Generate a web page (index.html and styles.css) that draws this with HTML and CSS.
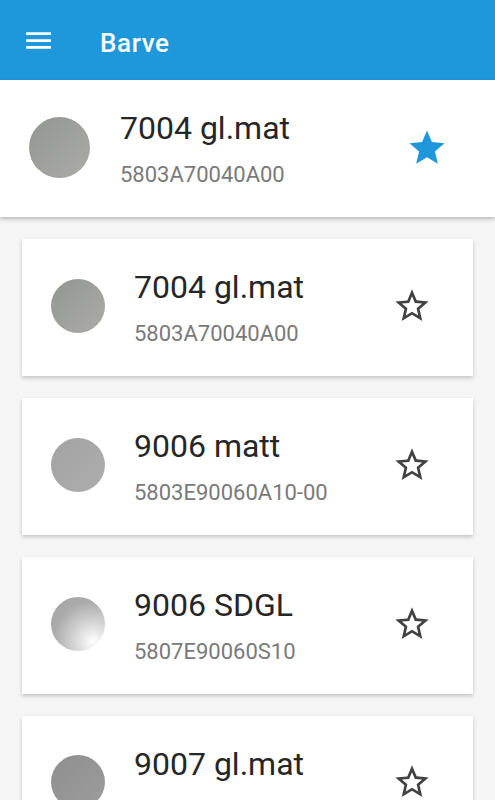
FILE: index.html
```html
<!DOCTYPE html>
<html lang="sl">
<head>
    <meta charset="UTF-8">
    <meta name="viewport" content="width=device-width, initial-scale=1.0">
    <title>Barve</title>
    <link rel="stylesheet" href="styles.css">
</head>
<body>

    <header class="toolbar">
        <svg class="menu-icon" viewBox="0 0 24 24"><path d="M3 18h18v-2H3v2zm0-5h18v-2H3v2zm0-7v2h18V6H3z"/></svg>
        <h1>Barve</h1>
    </header>

    <!-- izbrana barva -->
    <div class="selected">
        <div class="swatch swatch-big swatch-7004"></div>
        <div class="info">
            <div class="name">7004 gl.mat</div>
            <div class="code">5803A70040A00</div>
        </div>
        <svg class="star star-on" viewBox="0 0 24 24"><path d="M12 17.27L18.18 21l-1.64-7.03L22 9.24l-7.19-.61L12 2 9.19 8.63 2 9.24l5.46 4.73L5.82 21z"/></svg>
    </div>

    <div class="list">
        <div class="card">
            <div class="swatch swatch-7004"></div>
            <div class="info">
                <div class="name">7004 gl.mat</div>
                <div class="code">5803A70040A00</div>
            </div>
            <svg class="star" viewBox="0 0 24 24"><path d="M22 9.24l-7.19-.62L12 2 9.19 8.63 2 9.24l5.46 4.73L5.82 21 12 17.27 18.18 21l-1.63-7.03L22 9.24zM12 15.4l-3.76 2.27 1-4.28-3.32-2.88 4.38-.38L12 6.1l1.71 4.04 4.38.38-3.32 2.88 1 4.28L12 15.4z"/></svg>
        </div>
        <div class="card">
            <div class="swatch swatch-9006m"></div>
            <div class="info">
                <div class="name">9006 matt</div>
                <div class="code">5803E90060A10-00</div>
            </div>
            <svg class="star" viewBox="0 0 24 24"><path d="M22 9.24l-7.19-.62L12 2 9.19 8.63 2 9.24l5.46 4.73L5.82 21 12 17.27 18.18 21l-1.63-7.03L22 9.24zM12 15.4l-3.76 2.27 1-4.28-3.32-2.88 4.38-.38L12 6.1l1.71 4.04 4.38.38-3.32 2.88 1 4.28L12 15.4z"/></svg>
        </div>
        <div class="card">
            <div class="swatch swatch-9006s"></div>
            <div class="info">
                <div class="name">9006 SDGL</div>
                <div class="code">5807E90060S10</div>
            </div>
            <svg class="star" viewBox="0 0 24 24"><path d="M22 9.24l-7.19-.62L12 2 9.19 8.63 2 9.24l5.46 4.73L5.82 21 12 17.27 18.18 21l-1.63-7.03L22 9.24zM12 15.4l-3.76 2.27 1-4.28-3.32-2.88 4.38-.38L12 6.1l1.71 4.04 4.38.38-3.32 2.88 1 4.28L12 15.4z"/></svg>
        </div>
        <div class="card">
            <div class="swatch swatch-9007"></div>
            <div class="info">
                <div class="name">9007 gl.mat</div>
            </div>
            <svg class="star" viewBox="0 0 24 24"><path d="M22 9.24l-7.19-.62L12 2 9.19 8.63 2 9.24l5.46 4.73L5.82 21 12 17.27 18.18 21l-1.63-7.03L22 9.24zM12 15.4l-3.76 2.27 1-4.28-3.32-2.88 4.38-.38L12 6.1l1.71 4.04 4.38.38-3.32 2.88 1 4.28L12 15.4z"/></svg>
        </div>
    </div>

</body>
</html>
```

FILE: styles.css
```css
body {
    margin: 0;
    font-family: Roboto, "Noto Sans", sans-serif;
    background-color: #f5f5f5;
    overflow: hidden;
}
.toolbar {
    height: 80px;
    background-color: #1f97db;
    display: flex;
    align-items: center;
    padding-left: 22px;
    color: #fff;
}
.menu-icon {
    width: 33px;
    height: 33px;
    fill: #fff;
}
.toolbar h1 {
    margin: 5px 0 0 45px;
    font-size: 26px;
    font-weight: 500;
    letter-spacing: 0.6px;
}
.selected {
    height: 137px;
    background-color: #fff;
    display: flex;
    align-items: center;
    padding: 0 47px 0 29px;
    box-shadow: 0 2px 4px rgba(0, 0, 0, 0.25);
    position: relative;
}
.list {
    padding: 22px 22px 0;
    display: flex;
    flex-direction: column;
    gap: 22px;
}
.card {
    height: 137px;
    flex-shrink: 0;
    background-color: #fff;
    display: flex;
    align-items: center;
    padding: 0 41px 0 29px;
    box-shadow: 0 2px 4px rgba(0, 0, 0, 0.2);
}
/* zadnja kartica je odrezana na dnu zaslona */
.card:last-child {
    align-items: flex-start;
    padding-top: 30px;
    height: 107px;
}
.card:last-child .swatch {
    margin-top: 9px;
}
.card:last-child .star {
    margin-top: 16px;
}
.swatch {
    width: 54px;
    height: 54px;
    border-radius: 50%;
    flex-shrink: 0;
    margin-top: -4px;
}
.swatch-big {
    width: 61px;
    height: 61px;
    margin-top: -2px;
}
.swatch-7004 {
    background: linear-gradient(135deg, #939590, #abaca8);
}
.swatch-9006m {
    background: linear-gradient(135deg, #a3a3a3, #adadad);
}
.swatch-9006s {
    background: radial-gradient(circle at 78% 82%, #fff 0%, #d6d6d6 30%, #ababab 65%, #a3a3a3 100%);
}
.swatch-9007 {
    background: linear-gradient(135deg, #8f8f8f, #9c9c9c);
}
.info {
    flex: 1;
    margin-left: 29px;
}
.selected .info {
    margin-left: 30px;
}
.name {
    font-size: 32px;
    line-height: 36px;
    color: #262626;
}
.code {
    margin-top: 16px;
    font-size: 22px;
    line-height: 26px;
    color: #7a7a7a;
}
.star {
    width: 40px;
    height: 40px;
    fill: #424242;
    flex-shrink: 0;
    margin-top: -4px;
}
.star-on {
    width: 42px;
    height: 42px;
    fill: #1f97db;
    margin-top: -2px;
}
```
